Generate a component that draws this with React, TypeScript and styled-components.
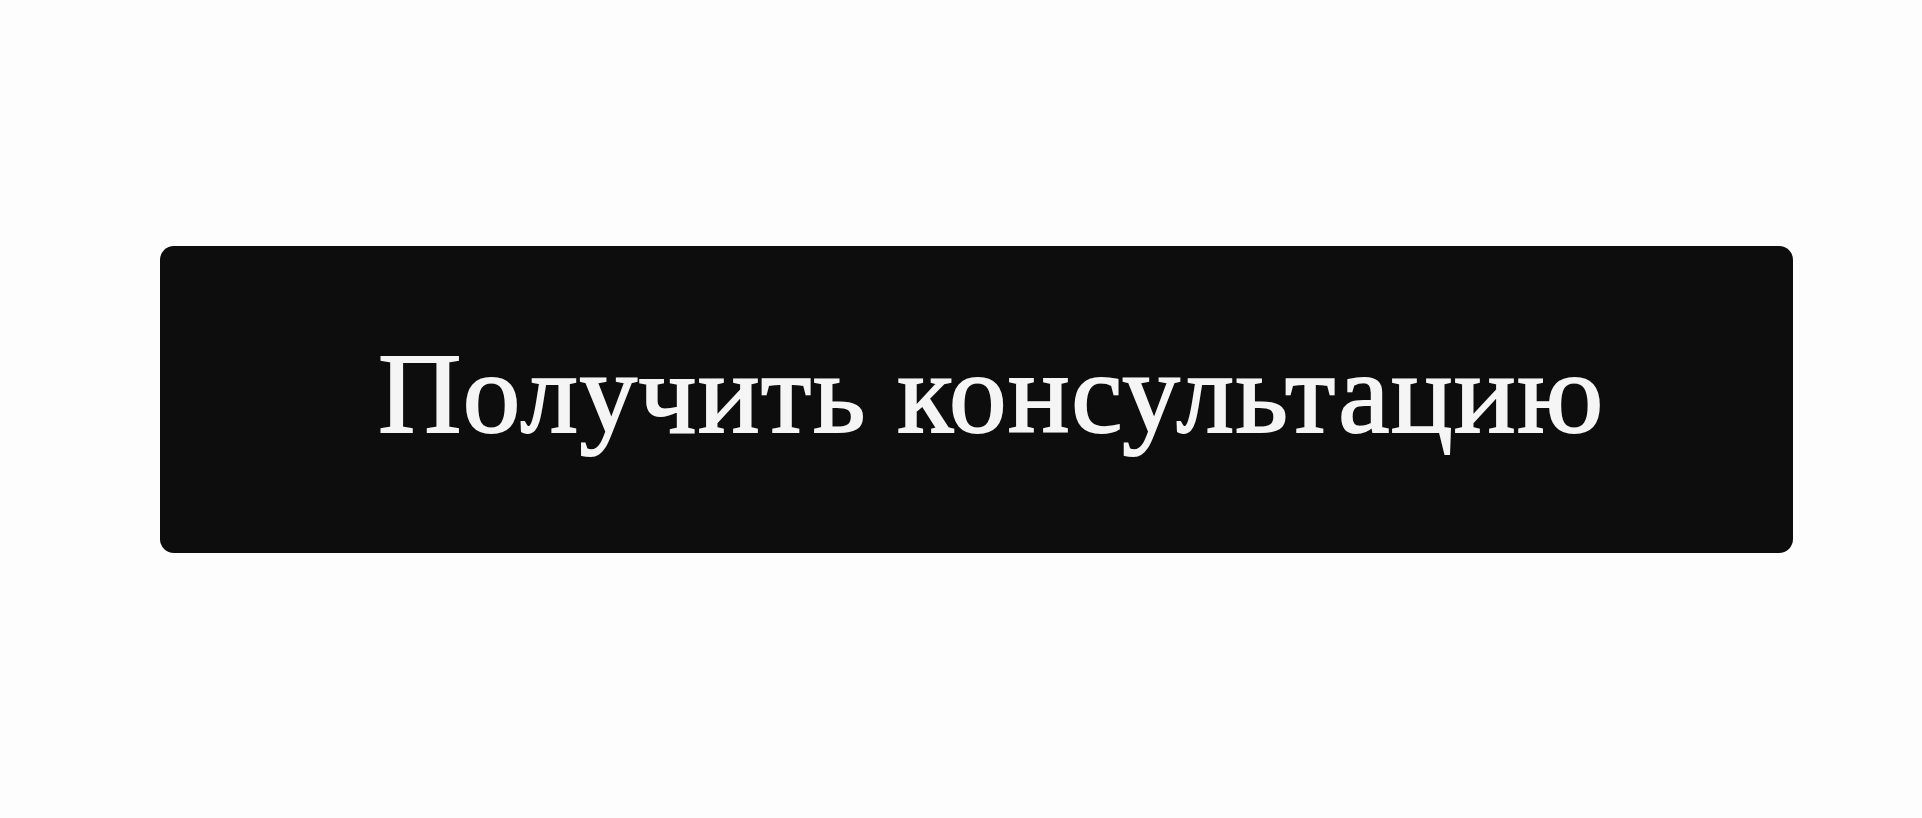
import React from "react";
import styled, { createGlobalStyle } from "styled-components";

const Global = createGlobalStyle`
  html, body { margin: 0; padding: 0; background: #fdfdfd; }
  body { width: 1922px; height: 818px; overflow: hidden; }
`;

const Page = styled.div`
  display: flex;
  padding: 246px 129px 0 160px;
  height: 818px;
  box-sizing: border-box;
`;

const Button = styled.button`
  flex: 1;
  height: 307px;
  border: none;
  border-radius: 14px;
  background: #0d0d0d;
  color: #f5f5f5;
  font-family: "Liberation Serif", "Times New Roman", serif;
  font-size: 115px;
  font-weight: 400;
  letter-spacing: 1.6px;
  -webkit-text-stroke: 2px #f5f5f5;
  display: flex;
  align-items: center;
  justify-content: center;
  padding: 0 0 12px 30px;
  cursor: pointer;
  line-height: 1;
`;

export default function App() {
  return (
    <>
      <Global />
      <Page>
        <Button>Получить консультацию</Button>
      </Page>
    </>
  );
}
